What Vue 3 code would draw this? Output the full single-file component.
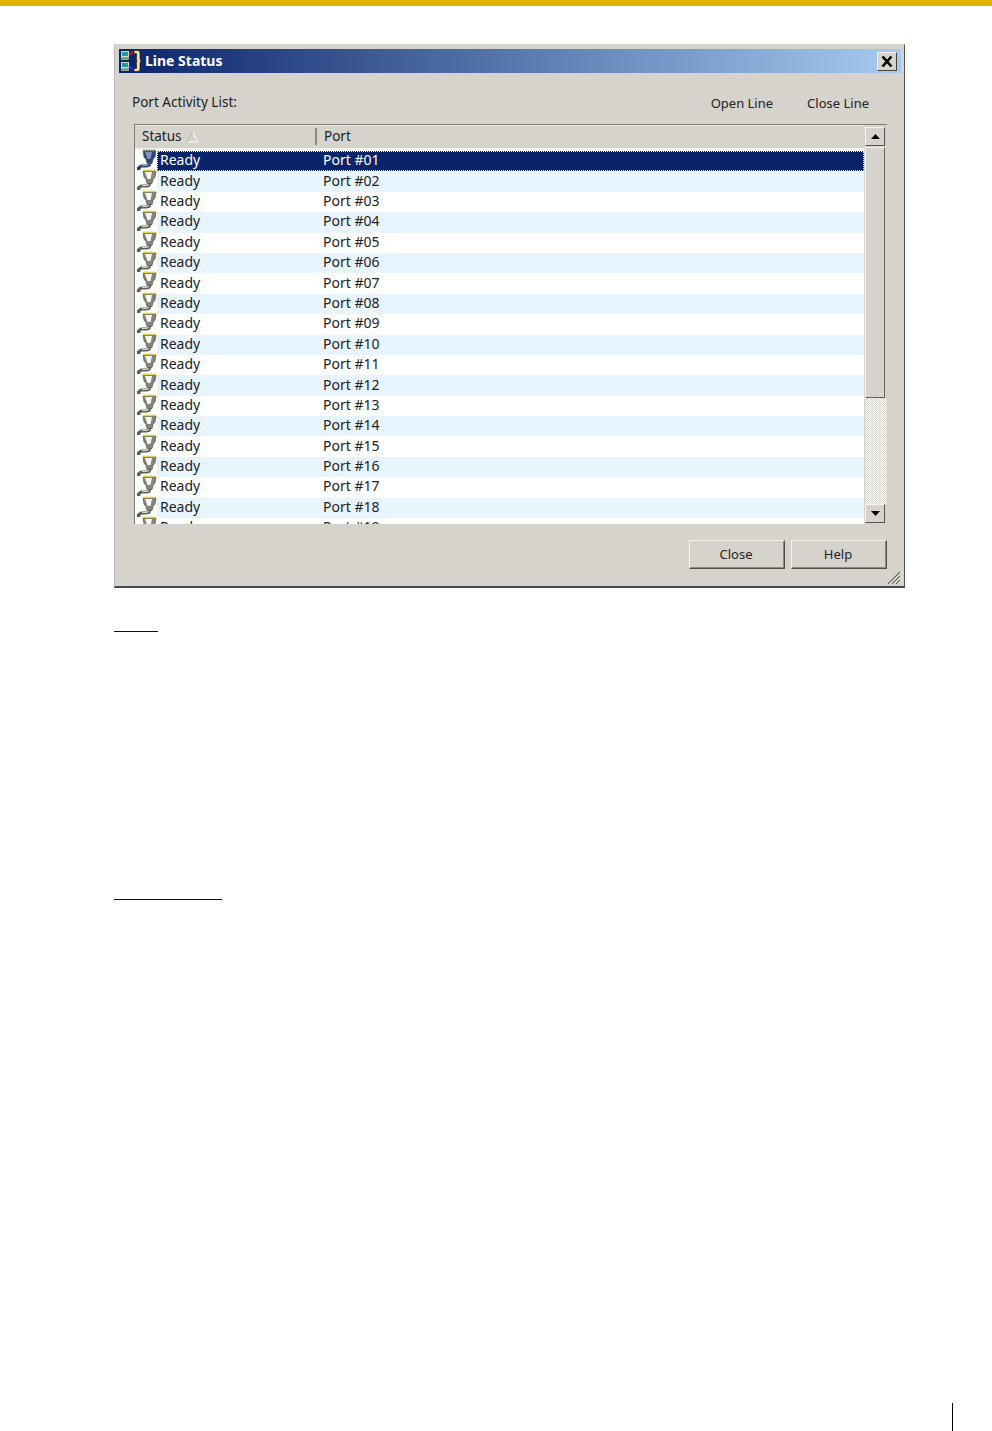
<template>
  <div class="page">
    <div class="top-bar"></div>

    <div class="window">
      <div class="title-bar">
        <svg class="title-icon" width="22" height="24" viewBox="0 0 22 24">
          <rect x="1" y="1" width="10" height="22" fill="#0d2a5c" />
          <rect x="1.5" y="2.5" width="7" height="5" fill="#1f9a9a" stroke="#cfd6d6" />
          <rect x="1.5" y="8.5" width="7" height="2" fill="#4fb04f" stroke="#cfd6d6" stroke-width="0.6" />
          <rect x="1.5" y="13.5" width="7" height="5" fill="#1f9a9a" stroke="#cfd6d6" />
          <rect x="1.5" y="19.5" width="7" height="2" fill="#4fb04f" stroke="#cfd6d6" stroke-width="0.6" />
          <path d="M9 6 L13 3" stroke="#d82020" stroke-width="1.6" fill="none" />
          <path d="M9 17 L13 20" stroke="#2438e0" stroke-width="1.6" fill="none" />
          <path d="M14 1.5 H18 Q20 1.5 20 4 V9 Q20 11 21 12 Q20 13 20 15 V20 Q20 22.5 18 22.5 H14 V19.5 H16.5 V14.5 Q16.5 12.5 17 12 Q16.5 11.5 16.5 9.5 V4.5 H14 Z" fill="#f4e6a8" stroke="#1c1a10" stroke-width="0.7" />
        </svg>
        <span class="title-text">Line Status</span>
        <button class="close-x">
          <svg width="12" height="11" viewBox="0 0 12 11">
            <path d="M1.5 0.5 L10.5 10.5 M10.5 0.5 L1.5 10.5" stroke="#000" stroke-width="2.6" />
          </svg>
        </button>
      </div>

      <div class="toolbar">
        <span class="list-label">Port Activity List:</span>
        <div class="toolbar-actions">
          <span>Open Line</span>
          <span>Close Line</span>
        </div>
      </div>

      <div class="list-frame">
        <div class="list-main">
          <div class="list-head">
            <div class="head-status">
              <span>Status</span>
              <svg class="sort-mark" width="13" height="12" viewBox="0 0 13 12">
                <path d="M6.5 1 L12 11 H1 Z" fill="none" stroke="#ffffff" />
                <path d="M6.5 1 L1 11" fill="none" stroke="#a8a49c" />
              </svg>
            </div>
            <div class="head-port">Port</div>
          </div>
          <div class="rows">
            <div
              v-for="(row, idx) in rows"
              :key="row.port"
              class="row"
              :class="{ selected: idx === 0, alt: idx % 2 === 1 }"
            >
              <svg class="row-icon" width="22" height="21" viewBox="0 0 22 21">
                <path d="M14.5 13 V15 Q14.5 17 11 17 H7 Q4.5 17 4 19.5 H2" fill="none" :stroke="idx === 0 ? '#2d4275' : '#5f5f59'" stroke-width="3" />
                <path d="M14 14 V15 Q14 16.5 11 16.5 H7" fill="none" :stroke="idx === 0 ? '#7f93c0' : '#d6d6d0'" stroke-width="1" />
                <path d="M8 2 H21 L20 8 L18 10.5 L17 14.5 H12 L11 10.5 L9 8 Z" :fill="idx === 0 ? '#2d4275' : '#85857e'" stroke="#55554f" stroke-width="0.7" />
                <path d="M10 3 H17 L15.5 10 H12.5 Z" :fill="idx === 0 ? '#7f93c0' : '#f6f6f2'" />
                <path d="M8.5 1.4 H21" :stroke="idx === 0 ? '#6b7d4a' : '#e8d820'" stroke-width="1.8" stroke-dasharray="1.5 1" />
              </svg>
              <div class="row-body">
                <span class="cell-status">{{ row.status }}</span>
                <span class="cell-port">{{ row.port }}</span>
              </div>
            </div>
          </div>
        </div>

        <div class="scrollbar">
          <button class="scroll-btn">
            <svg width="9" height="5" viewBox="0 0 9 5"><path d="M4.5 0 L9 5 H0 Z" fill="#000" /></svg>
          </button>
          <div class="scroll-thumb"></div>
          <div class="scroll-track"></div>
          <button class="scroll-btn">
            <svg width="9" height="5" viewBox="0 0 9 5"><path d="M0 0 H9 L4.5 5 Z" fill="#000" /></svg>
          </button>
        </div>
      </div>

      <div class="footer">
        <button class="win-btn">Close</button>
        <button class="win-btn">Help</button>
      </div>

      <svg class="grip" width="14" height="13" viewBox="0 0 14 13">
        <path d="M13 1 L1 13 M13 5 L5 13 M13 9 L9 13" stroke="#6e6c66" stroke-width="1.2" fill="none" />
        <path d="M14 2 L3 13 M14 6 L7 13 M14 10 L11 13" stroke="#ffffff" stroke-width="0.8" fill="none" />
      </svg>
    </div>

    <div class="rule rule-note"></div>
    <div class="rule rule-long"></div>
    <div class="page-mark"></div>
  </div>
</template>

<script setup>
const rows = Array.from({ length: 19 }, (_, i) => ({
  status: 'Ready',
  port: 'Port #' + String(i + 1).padStart(2, '0'),
}))
</script>

<style>
html, body { background: #fff; }
</style>

<style scoped>
.page {
  width: 992px;
  height: 1431px;
  overflow: hidden;
  background: #fff;
  font-family: "Noto Sans", "Liberation Sans", sans-serif;
  font-size: 14px;
  color: #222;
}
.top-bar {
  height: 6px;
  background: #e0b400;
}
.window {
  position: relative;
  box-sizing: border-box;
  width: 791px;
  height: 544px;
  margin: 38px 0 0 114px;
  padding: 4px 3px 0 4px;
  background: #d6d3cc;
  border: 1px solid #bdb9b2;
  border-top-color: #dcd9d3;
  border-right-color: #55534f;
  border-bottom: 2px solid #4a4946;
}
.title-bar {
  display: flex;
  align-items: center;
  height: 24px;
  padding: 0 4px 0 1px;
  background: linear-gradient(90deg, #0a246a, #a6caf0);
}
.title-icon { flex: none; }
.title-text {
  margin: -2px 0 0 3px;
  color: #fff;
  font-weight: bold;
  font-size: 14px;
}
.close-x {
  display: flex;
  align-items: center;
  justify-content: center;
  width: 20px;
  height: 19px;
  margin-left: auto;
  padding: 0;
  background: #d6d3cc;
  border: 1px solid;
  border-color: #f4f2ee #45433f #45433f #f4f2ee;
}
.toolbar {
  display: flex;
  align-items: center;
  justify-content: space-between;
  height: 51px;
  padding: 7px 32px 0 13px;
  box-sizing: border-box;
}
.list-label { font-size: 13.5px; }
.toolbar-actions {
  display: flex;
  gap: 34px;
  padding-top: 2px;
  font-size: 13px;
}
.list-frame {
  display: flex;
  box-sizing: border-box;
  width: 753px;
  height: 400px;
  margin-left: 15px;
  background: #fff;
  border-top: 1px solid #807c76;
  border-left: 1px solid #807c76;
  overflow: hidden;
}
.list-main {
  flex: 1;
  min-width: 0;
}
.list-head {
  display: flex;
  align-items: center;
  height: 23px;
  background: #d6d3cc;
  border-bottom: 2px solid #f4f2ee;
  box-shadow: inset 0 1px 0 #f0eeea;
}
.head-status {
  display: flex;
  align-items: center;
  gap: 4px;
  box-sizing: border-box;
  width: 182px;
  height: 17px;
  padding-left: 7px;
  border-right: 2px solid #8d8a84;
  font-size: 13.5px;
  line-height: 15px;
}
.head-port {
  padding-left: 7px;
  font-size: 13.5px;
  line-height: 15px;
}
.rows { padding-top: 1px; }
.row {
  display: flex;
  height: 20.4px;
}
.row-icon {
  flex: none;
  margin-top: -2px;
  position: relative;
  z-index: 1;
}
.row-body {
  flex: 1;
  display: flex;
  align-items: center;
  padding: 0 0 3px 3px;
  box-sizing: border-box;
}
.row.alt .row-body { background: #e9f5fe; }
.row.selected .row-body {
  background: #0a246a;
  color: #fff;
  outline: 1px dotted #f0efd0;
  outline-offset: -1px;
}
.cell-status {
  width: 163px;
  flex: none;
}
.scrollbar {
  flex: none;
  display: flex;
  flex-direction: column;
  box-sizing: border-box;
  width: 23px;
  padding: 2px 2px 1px 1px;
  background: #d6d3cc;
}
.scroll-btn {
  flex: none;
  display: flex;
  align-items: center;
  justify-content: center;
  height: 19px;
  padding: 0;
  background: #d6d3cc;
  border: 1px solid;
  border-color: #f4f2ee #55534f #55534f #f4f2ee;
}
.scroll-thumb {
  flex: none;
  box-sizing: border-box;
  height: 251px;
  margin-top: 1px;
  background: #d6d3cc;
  border: 1px solid;
  border-color: #f4f2ee #66645f #66645f #f4f2ee;
}
.scroll-track {
  flex: 1;
  margin-right: -2px;
  background-color: #fff;
  background-image: conic-gradient(#d6d3cc 25%, #fff 0 50%, #d6d3cc 0 75%, #fff 0);
  background-size: 2px 2px;
}
.footer {
  display: flex;
  justify-content: flex-end;
  gap: 6px;
  margin-top: 16px;
  padding-right: 14px;
}
.win-btn {
  width: 96px;
  height: 29px;
  padding: 0 2px 2px 0;
  background: #d6d3cc;
  font-family: inherit;
  font-size: 13px;
  color: #222;
  border: 1px solid;
  border-color: #f4f2ee #4f4d49 #4f4d49 #f4f2ee;
  box-shadow: inset -1px -1px 0 #8d8a84;
}
.grip {
  position: absolute;
  right: 3px;
  bottom: 2px;
}
.rule {
  height: 1px;
  background: #111;
}
.rule-note {
  width: 44px;
  margin: 43px 0 0 114px;
}
.rule-long {
  width: 108px;
  margin: 267px 0 0 114px;
}
.page-mark {
  width: 1px;
  height: 28px;
  margin: 503px 0 0 952px;
  background: #000;
}
</style>
